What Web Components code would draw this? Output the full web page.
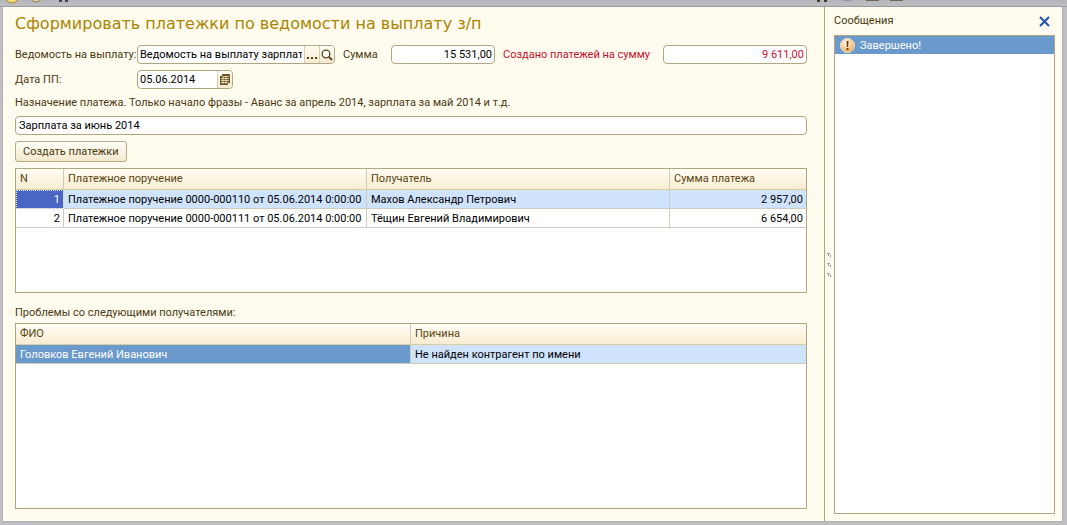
<!DOCTYPE html>
<html lang="ru">
<head>
<meta charset="utf-8">
<title>Сформировать платежки</title>
<style>
html, body { margin: 0; height: 100%; }
body { font: 11px/16px Roboto, "Liberation Sans", sans-serif; color: #4a3a12; background: #c0c0c4; }
</style>
</head>
<body>
<app-window></app-window>
<script>
const BASE = `
  *, *::before { box-sizing: border-box; }
  button, input { font: inherit; color: inherit; margin: 0; }
`;
const GRIDS = {
  payments: {
    mark: 'focus',
    columns: [
      { title: 'N', width: '48px', number: true },
      { title: 'Платежное поручение', width: 'auto' },
      { title: 'Получатель', width: 'auto' },
      { title: 'Сумма платежа', width: '136px', number: true }
    ],
    rows: [
      ['1', 'Платежное поручение 0000-000110 от 05.06.2014 0:00:00', 'Махов Александр Петрович', '2 957,00'],
      ['2', 'Платежное поручение 0000-000111 от 05.06.2014 0:00:00', 'Тёщин Евгений Владимирович', '6 654,00']
    ]
  },
  problems: {
    mark: 'active',
    columns: [{ title: 'ФИО', width: '50%' }, { title: 'Причина', width: '50%' }],
    rows: [['Головков Евгений Иванович', 'Не найден контрагент по имени']]
  }
};
function define(name, html, setup) {
  const template = document.createElement('template');
  template.innerHTML = html;
  customElements.define(name, class extends HTMLElement {
    constructor() {
      super();
      this.attachShadow({ mode: 'open' }).append(template.content.cloneNode(true));
    }
    connectedCallback() {
      if (setup && !this.ready) { this.ready = true; setup(this, this.shadowRoot); }
    }
  });
}

define('toolbar-edge', `
<style>
  :host { display: block; height: 7px; overflow: hidden; background: linear-gradient(#b4b5ba, #bfbfc4); border-bottom: 1px solid #a2a2a0; box-sizing: content-box; }
  .bits { display: flex; justify-content: space-between; padding-right: 162px; }
  svg { display: block; }
</style>
<div class="bits">
  <svg width="80" height="7" aria-hidden="true">
    <circle cx="12" cy="-4" r="7" fill="#f2d877" stroke="#a58832"/>
    <circle cx="36" cy="-4" r="6" fill="#d8cda0" stroke="#8c8056"/>
    <path d="M59 0h3v2h-3zM65 0h3v2h-3z" fill="#444"/>
  </svg>
  <svg width="90" height="7" aria-hidden="true">
    <path d="M2 0h3v2h-3zM9 0h3v2h-3z" fill="#38402a"/>
    <path d="M28 0h8v1h-8z" fill="#8f97a6"/>
    <path d="M51 0h13v1h-13zM75 0h13v1h-13z" fill="#6b6852"/>
  </svg>
</div>`);

define('form-field', `
<style>${BASE}
  :host { display: contents; }
  label { white-space: nowrap; }
  .box { display: flex; height: 19px; background: #fff; border: 1px solid #b0a67f; border-radius: 4px; overflow: hidden; min-width: 0; }
  :host([kind="date"]) .box { width: 96px; }
  :host([wide]) label, :host([wide]) .box { grid-column: 1 / -1; }
  input { flex: 1; min-width: 0; border: 0; outline: 0; padding: 0 2px; background: none; color: #000; }
  :host([wide]) input { padding: 0 3px; }
  :host([numeric]) input { text-align: right; }
  :host([alert]) label, :host([alert]) input { color: #c8102e; }
  button { display: flex; align-items: center; justify-content: center; width: 15px; padding: 0; border: 0; border-left: 1px solid #d8d0b4; background: linear-gradient(#fffdf3, #f3ead0); color: #4a3a12; }
  :host(:not([kind="ref"])) .ref, :host(:not([kind="date"])) .date { display: none; }
</style>
<label for="control"></label>
<div class="box">
  <input id="control" type="text" autocomplete="off">
  <button class="ref" type="button" aria-label="Выбрать"><svg width="10" height="10"><path d="M0 7h2v2h-2zM4 7h2v2h-2zM8 7h2v2h-2z" fill="#4a3a12"/></svg></button>
  <button class="ref" type="button" aria-label="Открыть"><svg width="12" height="12" fill="none" stroke="#59471c"><circle cx="5" cy="5" r="3.8" fill="#fffef8" stroke-width="1.3"/><path d="M8 8l3 3" stroke-width="2"/></svg></button>
  <button class="date" type="button" aria-label="Календарь"><svg width="12" height="12"><path d="M3 0h8v9h-2v2H1V2h2z" fill="#6a5626"/><path d="M4 2.500h6M2 4.500h8M2 6.500h8M2 8.500h7M4 2v8M7 2v8" stroke="#efe4c2" stroke-width=".8"/></svg></button>
</div>`, (host, root) => {
  root.querySelector('label').textContent = host.getAttribute('label');
  root.querySelector('input').value = host.getAttribute('value');
});

define('command-button', `
<style>${BASE}
  :host { display: flex; }
  button { height: 21px; padding: 0 7px; border: 1px solid #b5ab84; border-radius: 3px; background: linear-gradient(#fffef8, #f2e8cc); white-space: nowrap; }
</style>
<button type="button"><slot></slot></button>`);

define('data-grid', `
<style>${BASE}
  :host { display: block; background: #fff; border: 1px solid #b0a67f; overflow: hidden; box-sizing: border-box; }
  table { width: 100%; border-collapse: separate; border-spacing: 0; table-layout: fixed; color: #000; }
  th, td { padding: 0 4px; text-align: left; font-weight: normal; white-space: nowrap; overflow: hidden; border-right: 1px solid #cfcbbd; border-bottom: 1px solid #cfcbbd; }
  th { height: 21px; color: #5a430f; background: linear-gradient(#fffdf5, #f8edd0); border-bottom-color: #d9cda6; }
  td { height: 19px; padding-top: 2px; }
  th:last-child, td:last-child { border-right: 0; }
  td.number { text-align: right; padding-right: 3px; }
  tr.current td { background: #cfe3fd; }
  tr.current td.focus { color: #fff; background: #4a66c4; outline: 1px dotted #dfe6ff; outline-offset: -1px; }
  tr.current td.active { color: #fff; background: #6a99cc; }
</style>
<table><colgroup></colgroup><thead><tr></tr></thead><tbody></tbody></table>`, (host, root) => {
  const data = GRIDS[host.getAttribute('source')];
  const add = (parent, tag, text = '', cls = '') => {
    const el = document.createElement(tag);
    el.textContent = text;
    if (cls) el.className = cls;
    parent.append(el);
    return el;
  };
  for (const c of data.columns) {
    add(root.querySelector('colgroup'), 'col').style.width = c.width;
    add(root.querySelector('thead tr'), 'th', c.title).scope = 'col';
  }
  data.rows.forEach((row, r) => {
    const tr = add(root.querySelector('tbody'), 'tr', '', r === 0 ? 'current' : '');
    row.forEach((text, i) => add(tr, 'td', text,
      [data.columns[i].number ? 'number' : '', r === 0 && i === 0 ? data.mark : ''].join(' ').trim()));
  });
});

define('payment-form', `
<style>${BASE}
  :host { display: flex; flex-direction: column; padding: 5px 17px 12px 12px; min-width: 0; }
  h1 { margin: 0 0 9px; font: 16px/24px "DejaVu Sans", sans-serif; color: #ab8500; white-space: nowrap; }
  .fields { display: grid; grid-template-columns: 114px 198px 40px 104px 152px 1fr; gap: 6px 8px; align-items: center; }
  .purpose { display: grid; gap: 5px; margin: 6px 0; }
  .payments { height: 125px; margin: 6px 0 12px; }
  .problems { flex: 1; margin-top: 2px; }
  p { margin: 0; }
</style>
<h1>Сформировать платежки по ведомости на выплату з/п</h1>
<div class="fields">
  <form-field kind="ref" label="Ведомость на выплату:" value="Ведомость на выплату зарплаты"></form-field>
  <form-field numeric label="Сумма" value="15 531,00"></form-field>
  <form-field numeric alert label="Создано платежей на сумму" value="9 611,00"></form-field>
  <form-field kind="date" label="Дата ПП:" value="05.06.2014"></form-field>
</div>
<div class="purpose">
  <form-field wide label="Назначение платежа. Только начало фразы - Аванс за апрель 2014, зарплата за май 2014 и т.д." value="Зарплата за июнь 2014"></form-field>
</div>
<command-button>Создать платежки</command-button>
<data-grid class="payments" source="payments"></data-grid>
<p>Проблемы со следующими получателями:</p>
<data-grid class="problems" source="problems"></data-grid>`);

define('message-item', `
<style>
  :host { display: flex; align-items: center; gap: 5px; height: 18px; padding: 0 5px; background: #6a99cc; color: #fff; }
  span { padding-top: 2px; }
</style>
<svg width="15" height="15" viewBox="0 0 15 15" aria-hidden="true">
  <defs><radialGradient id="g" cx=".4" cy=".3" r=".8"><stop offset="0" stop-color="#fff6e2"/><stop offset=".6" stop-color="#f7c98c"/><stop offset="1" stop-color="#e0933c"/></radialGradient></defs>
  <circle cx="7.500" cy="7.500" r="7" fill="url(#g)" stroke="#f4e3c8"/>
  <path d="M6.500 3h2l-.4 6h-1.200zM6.500 10h2v2h-2z" fill="#6b3d12"/>
</svg>
<span><slot></slot></span>`);

define('messages-panel', `
<style>${BASE}
  :host { display: grid; grid-template-columns: 9px 1fr; border-left: 1px solid #b0a67f; padding-right: 7px; padding-bottom: 7px; }
  .grip { align-self: center; justify-self: center; margin-top: 10px; }
  .side { display: flex; flex-direction: column; min-width: 0; }
  header { display: flex; align-items: center; justify-content: space-between; height: 28px; padding-right: 4px; }
  h2 { margin: 0; font: inherit; }
  button { display: flex; padding: 1px; border: 0; background: none; }
  .list { flex: 1; background: #fff; border: 1px solid #b0a67f; }
</style>
<svg class="grip" width="5" height="26" aria-hidden="true"><path d="M0 0h3v1H0zM0 10h3v1H0zM0 20h3v1H0zM1 1h1v2H1zM1 11h1v2H1zM1 21h1v2H1zM3 2h1v2H3zM3 12h1v2H3zM3 22h1v2H3z" fill="#a39e8e"/></svg>
<section class="side">
  <header><h2>Сообщения</h2>
    <button type="button" aria-label="Закрыть"><svg width="11" height="11"><path d="M1 1l9 9M10 1l-9 9" stroke="#1c50b4" stroke-width="2"/></svg></button>
  </header>
  <div class="list"><slot></slot></div>
</section>`);

define('app-window', `
<style>${BASE}
  :host { display: flex; flex-direction: column; min-height: 100vh; box-sizing: border-box; padding-bottom: 4px; }
  main { flex: 1; display: grid; grid-template-columns: minmax(0, 1fr) 238px; margin: 0 5px 0 3px; background: #fffbee; box-shadow: 0 0 2px #8e8e96; }
</style>
<toolbar-edge></toolbar-edge>
<main>
  <payment-form></payment-form>
  <messages-panel><message-item>Завершено!</message-item></messages-panel>
</main>`);
</script>
</body>
</html>
